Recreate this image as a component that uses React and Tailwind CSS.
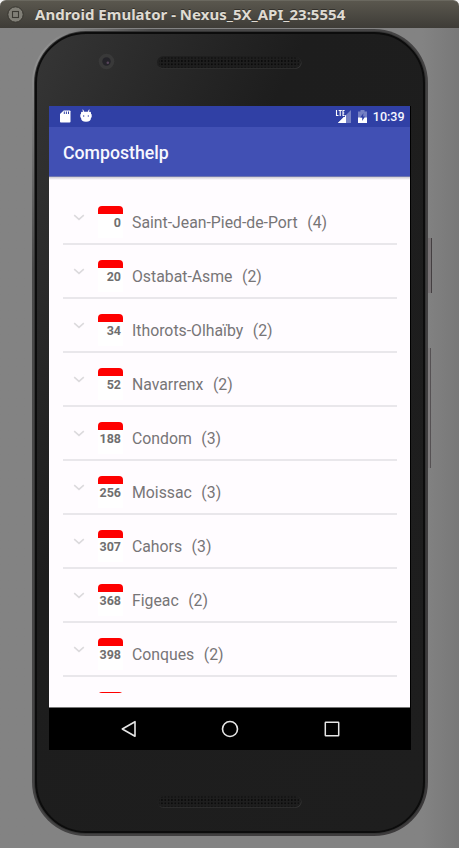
import React from "react";

const places = [
  { km: 0, name: "Saint-Jean-Pied-de-Port", count: 4 },
  { km: 20, name: "Ostabat-Asme", count: 2 },
  { km: 34, name: "Ithorots-Olhaïby", count: 2 },
  { km: 52, name: "Navarrenx", count: 2 },
  { km: 188, name: "Condom", count: 3 },
  { km: 256, name: "Moissac", count: 3 },
  { km: 307, name: "Cahors", count: 3 },
  { km: 368, name: "Figeac", count: 2 },
  { km: 398, name: "Conques", count: 2 },
];

function TitleBar() {
  return (
    <header className="flex h-7 shrink-0 items-center rounded-t-[6px] border-t border-[#6a685f] bg-linear-to-b from-[#5a574e] to-[#3e3c37] pl-[7px]">
      <svg width="17" height="17" viewBox="0 0 17 17" className="shrink-0">
        <circle cx="8.5" cy="8.5" r="7.7" fill="#817f77" stroke="#37352f" strokeWidth="1" />
        <rect x="5.5" y="5.5" width="6" height="6" fill="none" stroke="#3b3933" strokeWidth="1.1" />
      </svg>
      <h1 className="ml-[11px] whitespace-nowrap pb-px font-['Noto_Sans',sans-serif] text-[15px] leading-[26px] font-bold tracking-[0.01px] text-[#dfdbd2] [text-shadow:0_-1px_0_#33312c]">
        Android Emulator - Nexus_5X_API_23:5554
      </h1>
    </header>
  );
}

function Speaker({ id }) {
  return (
    <svg width="145" height="13" viewBox="0 0 145 13">
      <defs>
        <pattern id={id} width="3.33" height="3.33" patternUnits="userSpaceOnUse">
          <circle cx="1.6" cy="1.6" r="0.85" fill="#050505" />
        </pattern>
      </defs>
      <rect x="0.5" y="1" width="144" height="11.7" rx="5.8" fill="#3a3a3a" />
      <rect x="0" y="0.3" width="144" height="12" rx="6" fill="#1e1e1e" />
      <rect x="2" y="1.5" width="140" height="10" rx="4.5" fill={`url(#${id})`} />
    </svg>
  );
}

function StatusBar() {
  return (
    <div className="flex h-[21px] shrink-0 items-center bg-[#3040a5] pl-[11px] pr-[5px]">
      <svg width="11" height="13" viewBox="0 0 11 13">
        <path d="M3.7 0.4H9.6Q10.5 0.4 10.5 1.3V11.6Q10.5 12.5 9.6 12.5H0.9Q0 12.5 0 11.6V4.1Z" fill="#fff" />
        <path d="M4.3 1.5V4M6.4 1.5V4M8.5 1.5V4" stroke="#3040a5" strokeWidth="1" />
      </svg>
      <svg width="12" height="14" viewBox="0 0 12 14" className="mb-px ml-[9px]">
        <path d="M2.8 0.7L3.8 3M9.2 0.7L8.2 3" stroke="#fff" strokeWidth="1" />
        <path d="M2 2.7H10Q11 2.7 11 3.7V8.5Q11 12.8 6 12.8T1 8.5V3.7Q1 2.7 2 2.7Z" fill="#fff" />
        <path d="M0.8 5.2V8.5M11.2 5.2V8.5" stroke="#fff" strokeWidth="1" />
        <circle cx="3.7" cy="7" r="0.65" fill="#3040a5" />
        <circle cx="8.3" cy="7" r="0.65" fill="#3040a5" />
      </svg>
      <svg width="17" height="15" viewBox="0 0 17 15" className="ml-auto">
        <path d="M16 1V14H3Z" fill="#7580c3" />
        <path d="M11 6V14H3Z" fill="#fff" />
        <path d="M0 0H10V8H0Z" fill="#3040a5" />
        <path d="M11 6V14H3L9 8H10V7Z" fill="#fff" />
        <path d="M1.5 1V6.5H3.5M3.6 1.5H6.8M5.2 1.5V7M9.6 1.5H8V6.5H9.6M8 4H9.3" fill="none" stroke="#fff" strokeWidth="1.1" />
      </svg>
      <svg width="9" height="13" viewBox="0 0 9 13" className="ml-[6px]">
        <path d="M0 1.5H2.5V0H6.5V1.5H9V13H0Z" fill="#7580c3" />
        <path d="M0 7.5H9V13H0Z" fill="#fff" />
        <path d="M5.5 3L2.2 7.5H4.2V11L7 6.4H5Z" fill="#3040a5" />
      </svg>
      <span className="ml-[6px] pt-px text-[12.5px] leading-5 font-medium text-[#f5f6ff]">10:39</span>
    </div>
  );
}

function KmBadge({ km }) {
  return (
    <div className="ml-[13px] flex h-8 w-[25px] flex-col rounded-t-[4px] bg-white">
      <div className="h-[7.5px] shrink-0 rounded-t-[4px] bg-[#fe0000]" />
      <span className="mt-[1.5px] pr-[2px] text-right text-[12.5px] leading-[15px] font-bold text-[#6f6f6f]">{km}</span>
    </div>
  );
}

function PlaceRow({ km, name, count }) {
  return (
    <li className="flex h-[54px] shrink-0 items-start border-b-2 border-[#e9e7eb] pt-[15.4px] pl-[10.5px]">
      <svg width="12" height="8" viewBox="0 0 12 8" className="mt-[8px]">
        <path d="M1.2 1.2L6 5.4L10.8 1.2" fill="none" stroke="#dcdadd" strokeWidth="1.6" />
      </svg>
      <KmBadge km={km} />
      <span className="mt-[6.6px] ml-[9px] text-[15.8px] leading-5 whitespace-nowrap text-[#777577]">{name}</span>
      <span className="mt-[6.6px] ml-[9.5px] text-[15.8px] leading-5 text-[#777577]">({count})</span>
    </li>
  );
}

function NavBar() {
  return (
    <nav className="flex h-[43px] shrink-0 items-center justify-between border-t border-[#777] bg-black pr-[69px] pl-[71px]">
      <svg width="18" height="18" viewBox="0 0 18 18">
        <path d="M15 1.7V16.3L2.3 9Z" fill="none" stroke="#e6e6e6" strokeWidth="1.6" strokeLinejoin="round" />
      </svg>
      <svg width="18" height="18" viewBox="0 0 18 18">
        <circle cx="9" cy="9" r="7.5" fill="none" stroke="#e6e6e6" strokeWidth="1.6" />
      </svg>
      <svg width="18" height="18" viewBox="0 0 18 18">
        <rect x="2.3" y="2.3" width="13.4" height="13.4" rx="0.5" fill="none" stroke="#e6e6e6" strokeWidth="1.5" />
      </svg>
    </nav>
  );
}

function Screen() {
  return (
    <main className="mr-px flex h-[644px] w-[362px] shrink-0 flex-col border-r border-black bg-[#fffcff] font-[Roboto,sans-serif]">
      <StatusBar />
      <div className="flex h-[50px] shrink-0 items-center border-b border-[#6f77b0] bg-[#4150b4] pt-[2px] pl-[14.5px]">
        <h2 className="text-[17.7px] leading-6 font-medium text-[#f7f7ff]">Composthelp</h2>
      </div>
      <div className="h-[3px] shrink-0 bg-linear-to-b from-[#cfccd0] to-[#fffcff]" />
      <ul className="mr-[13px] ml-[14px] mt-[11px] mb-[14px] flex min-h-0 flex-1 flex-col overflow-hidden">
        {places.map((p) => (
          <PlaceRow key={p.km} {...p} />
        ))}
        <li className="flex h-[54px] shrink-0 pt-[15px] pl-[22.5px]">
          <KmBadge km="" />
        </li>
      </ul>
      <NavBar />
    </main>
  );
}

export default function App() {
  return (
    <div className="flex h-[848px] w-[459px] flex-col overflow-hidden bg-[#f4f4f4]">
      <TitleBar />
      <div className="flex min-h-0 flex-1 items-start bg-linear-to-r from-[#838383] from-92% to-[#787878] pl-[32px]">
        <div className="mt-px flex h-[807px] w-[396px] shrink-0 rounded-[54px] bg-linear-to-br from-[#a0a0a0] via-[#4a4a4a] via-15% to-[#3c3a3b] p-[2px]">
          <div className="flex flex-1 rounded-[52px] bg-[#353535] p-px">
            <div className="flex flex-1 flex-col items-center rounded-[51px] border-2 border-[#0c0c0c] bg-linear-to-br from-[#363636] via-[#1d1d1d] via-35% to-[#1e1e1e]">
              <div className="flex h-[72px] w-full shrink-0 items-start pt-[19px] pl-[61px]">
                <svg width="17" height="17" viewBox="0 0 17 17">
                  <circle cx="8.5" cy="8.5" r="7.8" fill="#393939" />
                  <circle cx="8.5" cy="8.5" r="4.2" fill="#242329" />
                  <circle cx="9.8" cy="9.8" r="1.3" fill="#58465b" />
                </svg>
                <div className="mt-[3px] ml-[42px]">
                  <Speaker id="mesh-top" />
                </div>
              </div>
              <Screen />
              <div className="mt-[45px] mr-px">
                <Speaker id="mesh-bottom" />
              </div>
            </div>
          </div>
        </div>
        <div className="flex flex-col">
          <div className="mt-[210px] h-[55px] w-[4px] border-r border-[#443f41] bg-[#777274]" />
          <div className="mt-[55px] h-[120px] w-[3px] border-r border-[#555153] bg-[#7d7a7b]" />
        </div>
      </div>
    </div>
  );
}
